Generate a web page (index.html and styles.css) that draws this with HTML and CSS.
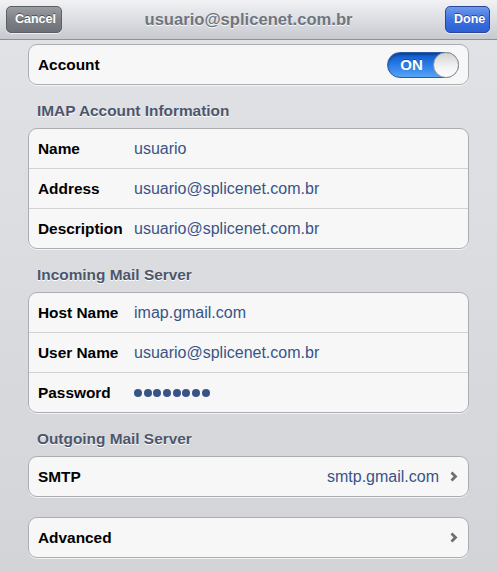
FILE: index.html
```html
<!DOCTYPE html>
<html lang="pt">
<head>
<meta charset="utf-8">
<title>usuario@splicenet.com.br</title>
<link rel="stylesheet" href="styles.css">
</head>
<body>
<div class="tela">
  <div class="barra">
    <a class="botao cancelar" href="#">Cancel</a>
    <h1 class="titulo">usuario@splicenet.com.br</h1>
    <a class="botao pronto" href="#">Done</a>
  </div>

  <div class="conteudo">
    <div class="grupo primeiro">
      <div class="linha">
        <span class="rotulo">Account</span>
        <span class="chave"><span class="chave-texto">ON</span><span class="bolinha"></span></span>
      </div>
    </div>

    <h3 class="secao">IMAP Account Information</h3>
    <div class="grupo">
      <div class="linha"><span class="rotulo">Name</span><span class="valor">usuario</span></div>
      <div class="linha"><span class="rotulo">Address</span><span class="valor">usuario@splicenet.com.br</span></div>
      <div class="linha"><span class="rotulo">Description</span><span class="valor">usuario@splicenet.com.br</span></div>
    </div>

    <h3 class="secao">Incoming Mail Server</h3>
    <div class="grupo">
      <div class="linha"><span class="rotulo">Host Name</span><span class="valor">imap.gmail.com</span></div>
      <div class="linha"><span class="rotulo">User Name</span><span class="valor">usuario@splicenet.com.br</span></div>
      <div class="linha"><span class="rotulo">Password</span><span class="valor senha"><i></i><i></i><i></i><i></i><i></i><i></i><i></i><i></i></span></div>
    </div>

    <h3 class="secao">Outgoing Mail Server</h3>
    <div class="grupo">
      <div class="linha">
        <span class="rotulo">SMTP</span>
        <span class="valor direita">smtp.gmail.com</span>
        <svg class="seta" width="8" height="11" viewBox="0 0 8 11"><path d="M1.5 1.5 L5.5 5.5 L1.5 9.5" fill="none" stroke="#6e6e6e" stroke-width="2.8"/></svg>
      </div>
    </div>

    <div class="grupo avancado">
      <div class="linha">
        <span class="rotulo">Advanced</span>
        <span class="valor direita"></span>
        <svg class="seta" width="8" height="11" viewBox="0 0 8 11"><path d="M1.5 1.5 L5.5 5.5 L1.5 9.5" fill="none" stroke="#6e6e6e" stroke-width="2.8"/></svg>
      </div>
    </div>
  </div>
</div>
</body>
</html>
```

FILE: styles.css
```css
    body {
        margin: 0;
        font-family: "Liberation Sans", Arial, sans-serif;
    }
    .tela {
        width: 497px;
        height: 571px;
        overflow: hidden;
        background: linear-gradient(#e1e3e7, #d3d4d8);
    }
    .barra {
        height: 39px;
        border-bottom: 1px solid #8e9198;
        background: linear-gradient(#f2f2f4, #dcdee2 50%, #c6c9cf);
        display: grid;
        grid-template-columns: 1fr auto 1fr;
        align-items: center;
        padding: 0 6px;
    }
    .titulo {
        margin: 0;
        font-size: 16.6px;
        font-weight: bold;
        color: #6f757e;
        text-shadow: 0 1px 0 #fafafa;
    }
    .botao {
        height: 25px;
        line-height: 25px;
        padding: 0 8px;
        border-radius: 5px;
        font-size: 12.5px;
        font-weight: bold;
        color: #fff;
        text-decoration: none;
        text-shadow: 0 -1px 0 rgba(0, 0, 0, 0.45);
        box-shadow: 0 1px 0 rgba(255, 255, 255, 0.6);
    }
    .cancelar {
        justify-self: start;
        width: 38px;
        border: 1px solid #5c5f64;
        background: linear-gradient(#9a9ea4, #7d8187 50%, #6e7278);
    }
    .pronto {
        justify-self: end;
        width: 27px;
        margin-right: 1px;
        border: 1px solid #27479a;
        background: linear-gradient(#6e9ae9, #3f72df 50%, #2b5fd4);
    }
    .conteudo {
        padding: 4px 28px 0;
    }
    .grupo {
        background: #f7f7f7;
        border: 1px solid #abadb1;
        border-radius: 9px;
        box-shadow: 0 1px 0 rgba(255, 255, 255, 0.7);
    }
    .avancado {
        margin-top: 20px;
    }
    .linha {
        height: 39px;
        display: flex;
        align-items: center;
        padding: 0 9px;
    }
    .linha + .linha {
        border-top: 1px solid #d2d3d5;
    }
    .rotulo {
        width: 96px;
        flex: none;
        font-size: 15.4px;
        font-weight: bold;
        color: #000;
    }
    .valor {
        font-size: 16px;
        color: #385487;
    }
    .direita {
        flex: 1;
        text-align: right;
        padding-right: 11px;
    }
    .seta {
        flex: none;
        margin-right: 1px;
    }
    .senha {
        display: flex;
        gap: 1.7px;
    }
    .senha i {
        width: 8px;
        height: 8px;
        border-radius: 50%;
        background: #385487;
    }
    .secao {
        margin: 0;
        padding: 17px 0 8px 9px;
        height: 18px;
        line-height: 18px;
        font-size: 15.4px;
        font-weight: bold;
        color: #4c566b;
        text-shadow: 0 1px 0 #fff;
    }
    .chave {
        margin-left: auto;
        width: 72px;
        height: 26px;
        border-radius: 13px;
        border: 1px solid #2b5aa8;
        box-sizing: border-box;
        background: linear-gradient(#0e57c6, #2a7ce8 50%, #56a3f4);
        display: flex;
        align-items: center;
        box-shadow: inset 0 2px 2px rgba(0, 0, 0, 0.25);
    }
    .chave-texto {
        flex: 1;
        text-align: center;
        font-size: 15px;
        font-weight: bold;
        color: #fff;
        padding-left: 2px;
        text-shadow: 0 -1px 0 rgba(0, 0, 0, 0.3);
    }
    .bolinha {
        width: 26px;
        height: 26px;
        margin-right: -1px;
        border-radius: 50%;
        box-sizing: border-box;
        border: 1px solid #9a9a9a;
        background: linear-gradient(#d2d2d2, #f4f4f4 60%, #fdfdfd);
    }
```
